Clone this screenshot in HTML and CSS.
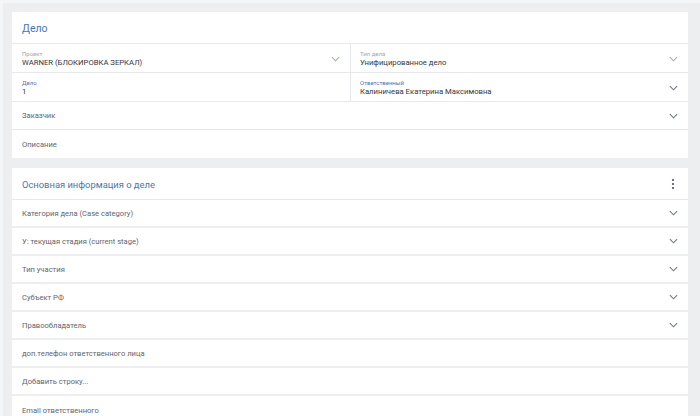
FILE: index.html
```html
<!DOCTYPE html>
<html lang="ru">
<head>
<meta charset="utf-8">
<link rel="stylesheet" href="styles.css">
</head>
<body>
<div class="page">
  <section class="card">
    <div class="card-head"><span class="card-title">Дело</span></div>
    <div class="pair">
      <div class="field">
        <div class="field-text"><span class="lbl">Проект</span><span class="val">WARNER (БЛОКИРОВКА ЗЕРКАЛ)</span></div>
        <svg class="chev light" viewBox="0 0 10 6"><path d="M1 1l4 4 4-4"/></svg>
      </div>
      <div class="field">
        <div class="field-text"><span class="lbl">Тип дела</span><span class="val">Унифицированное дело</span></div>
        <svg class="chev light" viewBox="0 0 10 6"><path d="M1 1l4 4 4-4"/></svg>
      </div>
    </div>
    <div class="pair">
      <div class="field">
        <div class="field-text"><span class="lbl blue">Дело</span><span class="val">1</span></div>
      </div>
      <div class="field">
        <div class="field-text"><span class="lbl blue">Ответственный</span><span class="val">Калиничева Екатерина Максимовна</span></div>
        <svg class="chev" viewBox="0 0 10 6"><path d="M1 1l4 4 4-4"/></svg>
      </div>
    </div>
    <div class="row"><span class="name">Заказчик</span><svg class="chev" viewBox="0 0 10 6"><path d="M1 1l4 4 4-4"/></svg></div>
    <div class="row"><span class="name">Описание</span></div>
  </section>

  <section class="card">
    <div class="card-head"><span class="card-title small">Основная информация о деле</span>
      <svg class="kebab" viewBox="0 0 4 12"><circle cx="2" cy="2" r="1.1"/><circle cx="2" cy="6" r="1.1"/><circle cx="2" cy="10" r="1.1"/></svg>
    </div>
    <div class="row thick"><span class="name">Категория дела (Case category)</span><svg class="chev" viewBox="0 0 10 6"><path d="M1 1l4 4 4-4"/></svg></div>
    <div class="row thick"><span class="name">У: текущая стадия (current stage)</span><svg class="chev" viewBox="0 0 10 6"><path d="M1 1l4 4 4-4"/></svg></div>
    <div class="row thick"><span class="name">Тип участия</span><svg class="chev" viewBox="0 0 10 6"><path d="M1 1l4 4 4-4"/></svg></div>
    <div class="row thick"><span class="name">Субъект РФ</span><svg class="chev" viewBox="0 0 10 6"><path d="M1 1l4 4 4-4"/></svg></div>
    <div class="row thick"><span class="name">Правообладатель</span><svg class="chev" viewBox="0 0 10 6"><path d="M1 1l4 4 4-4"/></svg></div>
    <div class="row thick"><span class="name">доп.телефон ответственного лица</span></div>
    <div class="row thick"><span class="name">Добавить строку...</span></div>
    <div class="row thick"><span class="name">Email ответственного</span></div>
  </section>
</div>
</body>
</html>
```
FILE: styles.css
```css
* { box-sizing: border-box; }
html, body { margin: 0; padding: 0; }
body {
  width: 700px;
  height: 416px;
  overflow: hidden;
  background: #eceef0;
  font-family: Roboto, "Liberation Sans", sans-serif;
  color: #3a3d42;
  border-top: 3px solid #f4f5f6;
  border-left: 3px solid #f4f5f6;
}
.page {
  padding: 9px 12px 0 9px;
  display: flex;
  flex-direction: column;
  gap: 10px;
}
.card {
  background: #fff;
  display: flex;
  flex-direction: column;
}
.card-head {
  height: 32px;
  display: flex;
  align-items: center;
  justify-content: space-between;
  padding: 1px 13px 0 10px;
  border-bottom: 1px solid #e6e8eb;
}
.card-title {
  color: #4577b4;
  font-size: 10.5px;
}
.card-title.small { font-size: 9.4px; }
.kebab { width: 4px; height: 12px; fill: #4a5160; }
.pair {
  display: grid;
  grid-template-columns: 338px 1fr;
  height: 29px;
  border-bottom: 1px solid #e6e8eb;
}
.field {
  display: flex;
  align-items: center;
  justify-content: space-between;
  padding: 2px 10px 0 10px;
}
.field + .field { border-left: 1px solid #e6e8eb; padding-left: 9px; }
.field-text { display: flex; flex-direction: column; line-height: 1; }
.lbl { font-size: 6px; color: #a2a7ae; margin-bottom: 1.5px; }
.lbl.blue { color: #4577b4; }
.val { font-size: 7.7px; color: #33363b; }
.row {
  height: 28px;
  display: flex;
  align-items: center;
  justify-content: space-between;
  padding: 0 10px 0 10px;
  border-bottom: 1px solid #e6e8eb;
}
.row:last-child { border-bottom: none; }
.row.thick { border-bottom: 2px solid #eceef0; }
.row.thick:last-child { border-bottom: none; }
.name { font-size: 7.6px; color: #5f646b; }
.chev { width: 9px; height: 6px; fill: none; stroke: #6b7686; stroke-width: 1.2; }
.chev.light { stroke: #a3abb5; }
```
